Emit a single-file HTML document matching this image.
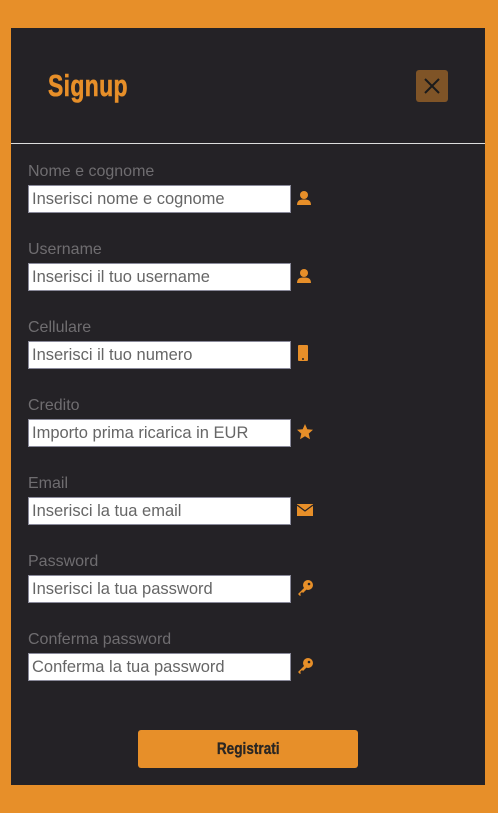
<!DOCTYPE html>
<html><head><meta charset="utf-8"><style>
html,body{margin:0;padding:0}
body{width:498px;height:813px;background:#e78f29;position:relative;overflow:hidden;font-family:"Liberation Sans",sans-serif}
.panel{position:absolute;left:11px;top:28px;width:474px;height:757px;background:#242226}
.title{position:absolute;left:37px;top:40px;color:#e78f29;font-size:31px;font-weight:bold;transform:scaleX(0.74);transform-origin:left top;letter-spacing:0.5px;-webkit-text-stroke:0.6px #e78f29}
.close{position:absolute;left:405px;top:42px;width:32px;height:32px;background:#7f5427;border-radius:3px}
.hr{position:absolute;left:0;top:115px;width:474px;height:1px;background:#ddd}
.lbl{position:absolute;left:17px;color:#6f6d70;font-size:16px}
.inp{position:absolute;left:17px;width:258px;height:26px;background:#fff;border:1px solid #8a8a9a;color:#666;font-size:16.5px;line-height:27px;padding-left:3px;box-sizing:content-box}
.ic{position:absolute;left:285px}
.btn{position:absolute;left:127px;top:702px;width:220px;height:38px;background:#e78f29;border-radius:3px;text-align:center;line-height:38px;color:#2a2623;font-weight:bold;font-size:17px}
.btn span{display:inline-block;transform:scaleX(0.8);-webkit-text-stroke:0.3px #2a2623}
</style></head><body>
<div class="panel">
<div class="title">Signup</div>
<div class="close"><svg width="32" height="32"><path d="M9 9L23 23M23 9L9 23" stroke="#1b1b1b" stroke-width="2"/></svg></div>
<div class="hr"></div>

<div class="lbl" style="top:135px">Nome e cognome</div>
<div class="inp" style="top:157px">Inserisci nome e cognome</div>
<svg class="ic" style="top:162px" width="16" height="16"><circle cx="8" cy="5" r="4" fill="#e78f29"/><path d="M1 15Q1 9 8 9.5Q15 9 15 15Z" fill="#e78f29"/></svg>

<div class="lbl" style="top:213px">Username</div>
<div class="inp" style="top:235px">Inserisci il tuo username</div>
<svg class="ic" style="top:240px" width="16" height="16"><circle cx="8" cy="5" r="4" fill="#e78f29"/><path d="M1 15Q1 9 8 9.5Q15 9 15 15Z" fill="#e78f29"/></svg>

<div class="lbl" style="top:291px">Cellulare</div>
<div class="inp" style="top:313px">Inserisci il tuo numero</div>
<svg class="ic" style="top:317px" width="16" height="17"><rect x="2" y="0" width="10" height="16" rx="1" fill="#e78f29"/><circle cx="7" cy="14" r="1" fill="#242226"/></svg>

<div class="lbl" style="top:369px">Credito</div>
<div class="inp" style="top:391px">Importo prima ricarica in EUR</div>
<svg class="ic" style="top:395px" width="18" height="18"><path d="M9 1L11.3 6.3L17 6.8L12.7 10.6L14 16.3L9 13.3L4 16.3L5.3 10.6L1 6.8L6.7 6.3Z" fill="#e78f29"/></svg>

<div class="lbl" style="top:447px">Email</div>
<div class="inp" style="top:469px">Inserisci la tua email</div>
<svg class="ic" style="top:475px" width="18" height="14"><rect x="1" y="1" width="16" height="12" fill="#e78f29"/><path d="M1 2L9 8L17 2" stroke="#242226" stroke-width="1.2" fill="none"/></svg>

<div class="lbl" style="top:525px">Password</div>
<div class="inp" style="top:547px">Inserisci la tua password</div>
<svg class="ic" style="top:551px" width="18" height="18"><circle cx="12" cy="6" r="5" fill="#e78f29"/><circle cx="13" cy="5" r="1.3" fill="#242226"/><path d="M9 8L2 15L4 17L5 16L4 15L6 13L7 14L11 10Z" fill="#e78f29"/></svg>

<div class="lbl" style="top:603px">Conferma password</div>
<div class="inp" style="top:625px">Conferma la tua password</div>
<svg class="ic" style="top:629px" width="18" height="18"><circle cx="12" cy="6" r="5" fill="#e78f29"/><circle cx="13" cy="5" r="1.3" fill="#242226"/><path d="M9 8L2 15L4 17L5 16L4 15L6 13L7 14L11 10Z" fill="#e78f29"/></svg>

<div class="btn"><span>Registrati</span></div>
</div>
</body></html>
